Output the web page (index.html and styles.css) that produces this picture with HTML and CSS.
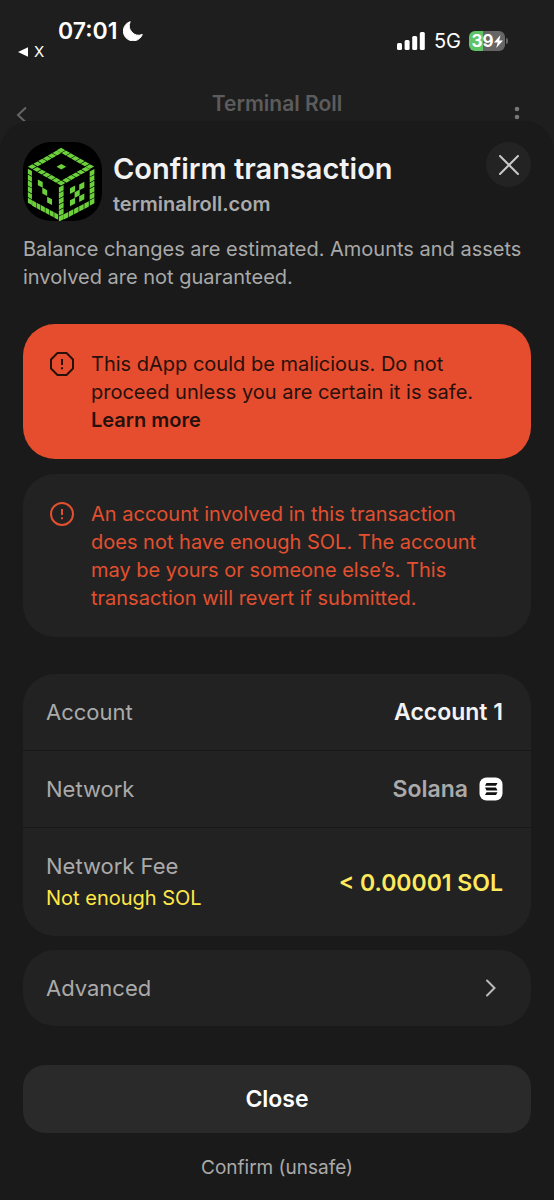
FILE: index.html
```html
<!DOCTYPE html>
<html lang="en">
<head>
    <meta charset="UTF-8">
    <meta name="viewport" content="width=device-width, initial-scale=1.0">
    <title>Confirm transaction</title>
    <link rel="stylesheet" href="styles.css">
</head>
<body>
    <!-- Status bar -->
    <div class="status-bar">
        <div class="status-left">
            <div class="clock">
                <span>07:01</span>
                <svg width="20" height="20" viewBox="0 0 20 20"><path d="M7.200.7A9.800 9.800 0 1 0 19.300 13.500 9.500 9.500 0 0 1 7.200.7z" fill="#fff" stroke="#fff" stroke-linejoin="round"/></svg>
            </div>
            <a class="back-app" href="#">
                <svg width="10" height="10" viewBox="0 0 10 10"><path d="M0 5L10 .2v9.600z" fill="#fff"/></svg>
                X
            </a>
        </div>
        <div class="status-right">
            <svg width="28" height="18" viewBox="0 0 28 18" fill="#fff">
                <rect x="0" y="11" width="5" height="7" rx="1.5"/>
                <rect x="7.6" y="8" width="5" height="10" rx="1.5"/>
                <rect x="15.2" y="4" width="5" height="14" rx="1.5"/>
                <rect x="22.8" y="0" width="5" height="18" rx="1.5"/>
            </svg>
            <span class="signal">5G</span>
            <div class="battery">
                <span>39</span>
                <svg width="9" height="13" viewBox="0 0 9 13"><path d="M6.500 0L0 7.400h3.700L2.200 13 9 5.400H5.200z" fill="#fff"/></svg>
            </div>
        </div>
    </div>

    <!-- Page behind the sheet -->
    <div class="app-bar">
        <button class="bar-button" aria-label="Back">
            <svg width="12" height="18" viewBox="0 0 12 18"><path d="M10 1.500L2 9l8 7.500" fill="none" stroke="#666" stroke-width="2"/></svg>
        </button>
        <span class="app-title">Terminal Roll</span>
        <button class="bar-button" aria-label="Menu">
            <svg width="6" height="22" viewBox="0 0 6 22" fill="#777"><circle cx="3" cy="3" r="2.3"/><circle cx="3" cy="11" r="2.3"/><circle cx="3" cy="19" r="2.3"/></svg>
        </button>
    </div>

    <main class="sheet">
        <header class="sheet-header">
            <svg class="logo" width="79" height="79" viewBox="27 24 237 237">
                <rect x="27" y="24" width="237" height="237" rx="84" fill="#000"/>
                <g fill="none" stroke="#6bd03c" stroke-width=".92" stroke-dasharray=".88 .12">
                    <!-- top -->
                    <g transform="matrix(14.4 8.2 -14.4 8.2 142 41)">
                        <path d="M0 .5H7M0 6.500H7M.5 1V6M6.500 1V6"/>
                        <path d="M3 3.500H4" stroke-dasharray="none" stroke-width="1"/>
                    </g>
                    <!-- left -->
                    <g transform="matrix(13.3 7.2 0 17.4 41 104)">
                        <path d="M.5 0V6M1 5.500H7"/>
                        <path d="M2.300 1.400h1.100M3.300 2.400h1.100M4.400 3.500h1.100" stroke-dasharray="none" stroke-width="1"/>
                    </g>
                    <!-- right -->
                    <g transform="matrix(15.4 -8 0 17.4 134 161)">
                        <path d="M.5 0V6M6.500 0V6M1 5.500H6"/>
                        <path d="M2.200 1.600h1M4 1.800h1M3.100 2.700h1M2.200 3.700h1M4 3.800h1" stroke-dasharray="none" stroke-width="1"/>
                    </g>
                </g>
            </svg>
            <div class="heading">
                <h1>Confirm transaction</h1>
                <p>terminalroll.com</p>
            </div>
            <button class="close-icon" aria-label="Dismiss">
                <svg width="20" height="20" viewBox="0 0 20 20"><path d="M1 1l18 18M19 1L1 19" stroke="#c8c8c8" stroke-width="2" stroke-linecap="round"/></svg>
            </button>
        </header>

        <p class="note">Balance changes are estimated. Amounts and assets involved are not guaranteed.</p>

        <div class="alert alert-danger">
            <svg width="24" height="24" viewBox="0 0 24 24" fill="none" stroke="#26100b" stroke-width="2"><path d="M7.500 1h9L23 7.500v9L16.500 23h-9L1 16.500v-9z" stroke-linejoin="round"/><path d="M12 7v6M12 15.300v2"/></svg>
            <p>This dApp could be malicious. Do not proceed unless you are certain it is safe. <a href="#">Learn more</a></p>
        </div>

        <div class="alert alert-warning">
            <svg width="24" height="24" viewBox="0 0 24 24" fill="none" stroke="#e2502f" stroke-width="2"><circle cx="12" cy="12" r="11"/><path d="M12 7v6M12 15.300v2"/></svg>
            <p>An account involved in this transaction does not have enough SOL. The account may be yours or someone else’s. This transaction will revert if submitted.</p>
        </div>

        <dl class="details">
            <div class="row">
                <dt>Account</dt>
                <dd class="account">Account 1</dd>
            </div>
            <div class="row">
                <dt>Network</dt>
                <dd>
                    Solana
                    <svg width="24" height="24" viewBox="0 0 24 24"><rect x=".5" y=".5" width="23" height="23" rx="7" fill="#fff"/><path d="M7.500 6h11l-1.500 2.800H6zM6 10.600h11l1.500 2.800h-11zM7.500 15.200h11L17 18H6z" fill="#111"/></svg>
                </dd>
            </div>
            <div class="row">
                <dt>Network Fee <small>Not enough SOL</small></dt>
                <dd class="fee">&lt; 0.00001 SOL</dd>
            </div>
        </dl>

        <button class="advanced">
            Advanced
            <svg width="12" height="18" viewBox="0 0 12 18"><path d="M2 1.500L9.500 9 2 16.500" fill="none" stroke="#bbb" stroke-width="2" stroke-linecap="round"/></svg>
        </button>

        <div class="actions">
            <button class="close">Close</button>
            <button class="confirm">Confirm (unsafe)</button>
        </div>
    </main>
</body>
</html>
```
FILE: styles.css
```css
* {
    box-sizing: border-box;
}
body {
    margin: 0;
    min-height: 100vh;
    display: flex;
    flex-direction: column;
    font-family: Inter, "Liberation Sans", sans-serif;
    background-color: #1e1e1e;
    color: #f2f2f2;
}
h1, p, dl, dd {
    margin: 0;
}
button {
    padding: 0;
    border: none;
    background: none;
    font-family: inherit;
    color: inherit;
    cursor: pointer;
}
svg {
    display: block;
    flex-shrink: 0;
}

/* status bar */
.status-bar {
    display: flex;
    justify-content: space-between;
    padding: 18px 49px 0 18px;
    color: #fff;
}
.clock {
    display: flex;
    align-items: center;
    gap: 6px;
    padding-left: 40px;
    font-size: 23px;
    font-weight: 600;
    line-height: 26px;
}
.back-app {
    display: flex;
    align-items: center;
    gap: 6px;
    font-size: 15px;
    line-height: 16px;
    color: #fff;
    text-decoration: none;
}
.status-right {
    display: flex;
    align-items: center;
    height: 46px;
}
.signal {
    margin: 0 8px 0 9px;
    font-size: 20px;
}
.battery {
    position: relative;
    display: flex;
    align-items: center;
    justify-content: center;
    width: 36px;
    height: 20px;
    border-radius: 6px;
    background: linear-gradient(90deg, #5fc466 39%, #666 39%);
    font-size: 17px;
    font-weight: 700;
}
.battery::after {
    content: "";
    position: absolute;
    right: -3px;
    top: 7px;
    width: 2px;
    height: 6px;
    border-radius: 0 2px 2px 0;
    background: #666;
}

/* dimmed page */
.app-bar {
    display: grid;
    grid-template-columns: 1fr auto 1fr;
    height: 57px;
    padding: 26px 16px 0;
    overflow: hidden;
}
.bar-button {
    justify-self: start;
    align-self: start;
    padding-top: 16px;
}
.bar-button:last-child {
    justify-self: end;
    padding-right: 18px;
}
.app-title {
    font-size: 21px;
    font-weight: 600;
    line-height: 28px;
    color: #5c5c5c;
}

/* sheet */
.sheet {
    flex: 1;
    padding: 21px 23px 17px;
    border-radius: 30px 30px 0 0;
    background: #1a1a1a;
}
.sheet-header {
    display: flex;
    align-items: flex-start;
}
.heading {
    flex: 1;
    padding: 9px 0 0 11px;
}
h1 {
    font-size: 29px;
    font-weight: 600;
    line-height: 36px;
}
.heading p {
    font-size: 20px;
    font-weight: 600;
    line-height: 34px;
    color: #aaa;
}
.close-icon {
    display: flex;
    align-items: center;
    justify-content: center;
    width: 45px;
    height: 45px;
    border-radius: 50%;
    background: #232323;
}
.note {
    padding-top: 14px;
    font-size: 20px;
    line-height: 28px;
    color: #a9a9a9;
}
.alert {
    display: flex;
    gap: 17px;
    padding: 26px 27px 25px;
    border-radius: 32px;
    font-size: 20px;
    line-height: 28px;
}
.alert svg {
    margin-top: 2px;
}
.alert-danger {
    margin-top: 33px;
    background: #e64d2f;
    color: #26100b;
}
.alert-danger a {
    color: inherit;
    font-weight: 600;
    text-decoration: none;
}
.alert-warning {
    margin-top: 15px;
    background: #222;
    color: #e2502f;
}
.details {
    margin-top: 37px;
    border-radius: 32px;
    background: #222;
    font-size: 23px;
    line-height: 30px;
}
.row {
    display: flex;
    justify-content: space-between;
    align-items: center;
    padding: 23px 28px 23px 23px;
    border-bottom: 1px solid #181818;
}
.row:last-child {
    padding-bottom: 21px;
    border-bottom: none;
}
dt {
    font-size: 22px;
    color: #aaa;
}
dt small {
    display: block;
    font-size: 20px;
    line-height: 34px;
    color: #ffe846;
}
dd {
    display: flex;
    align-items: center;
    gap: 11px;
    font-weight: 600;
    color: #aaa;
}
.account {
    color: #f2f2f2;
}
.fee {
    color: #ffe95c;
}
.advanced {
    display: flex;
    justify-content: space-between;
    align-items: center;
    width: 100%;
    margin-top: 14px;
    padding: 23px 34px 23px 23px;
    border-radius: 32px;
    background: #222;
    font-size: 22px;
    line-height: 30px;
    color: #aaa;
}
.actions {
    display: flex;
    flex-direction: column;
    gap: 21px;
    margin-top: 39px;
}
.close {
    padding: 19px;
    border-radius: 22px;
    background: #2a2a2a;
    font-size: 23px;
    font-weight: 600;
    line-height: 30px;
    color: #fff;
}
.confirm {
    font-size: 19px;
    line-height: 28px;
    color: #aaa;
}
```
